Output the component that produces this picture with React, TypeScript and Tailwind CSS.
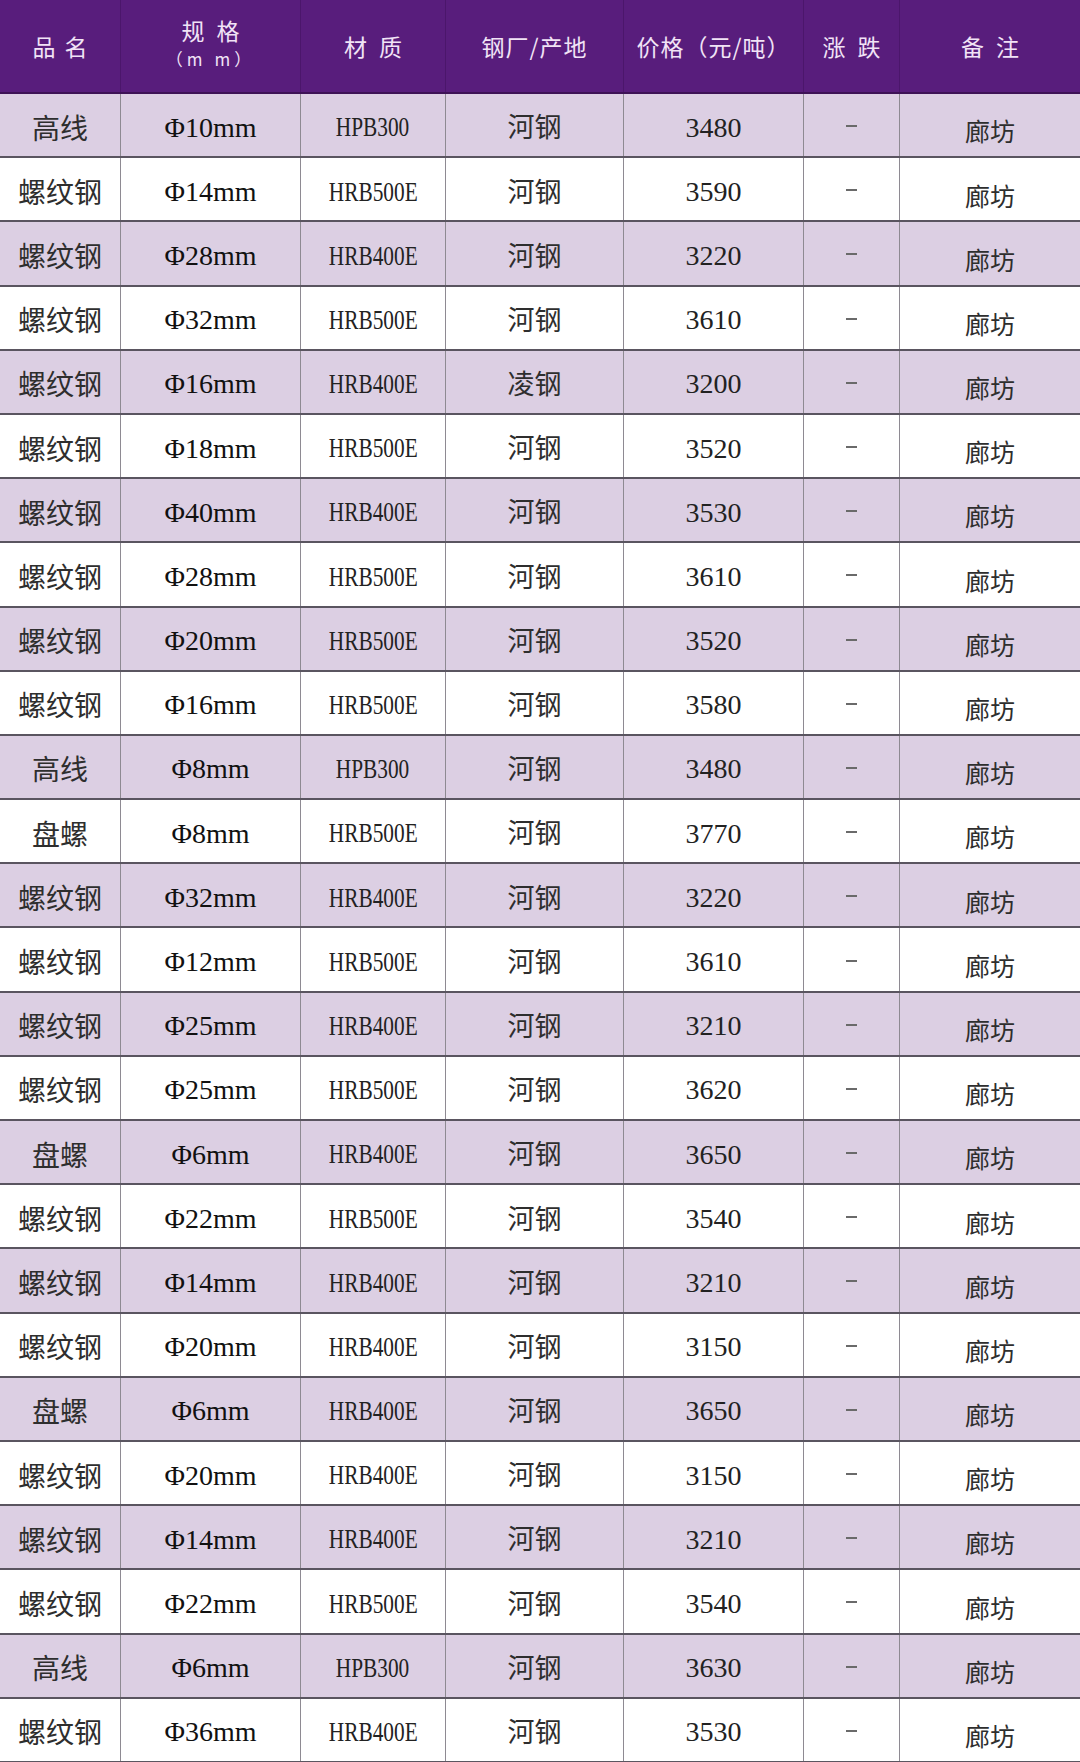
import React from "react";

const rows: [string, string, string, string, string][] = [
  ["高线", "Φ10mm", "HPB300", "河钢", "3480"],
  ["螺纹钢", "Φ14mm", "HRB500E", "河钢", "3590"],
  ["螺纹钢", "Φ28mm", "HRB400E", "河钢", "3220"],
  ["螺纹钢", "Φ32mm", "HRB500E", "河钢", "3610"],
  ["螺纹钢", "Φ16mm", "HRB400E", "凌钢", "3200"],
  ["螺纹钢", "Φ18mm", "HRB500E", "河钢", "3520"],
  ["螺纹钢", "Φ40mm", "HRB400E", "河钢", "3530"],
  ["螺纹钢", "Φ28mm", "HRB500E", "河钢", "3610"],
  ["螺纹钢", "Φ20mm", "HRB500E", "河钢", "3520"],
  ["螺纹钢", "Φ16mm", "HRB500E", "河钢", "3580"],
  ["高线", "Φ8mm", "HPB300", "河钢", "3480"],
  ["盘螺", "Φ8mm", "HRB500E", "河钢", "3770"],
  ["螺纹钢", "Φ32mm", "HRB400E", "河钢", "3220"],
  ["螺纹钢", "Φ12mm", "HRB500E", "河钢", "3610"],
  ["螺纹钢", "Φ25mm", "HRB400E", "河钢", "3210"],
  ["螺纹钢", "Φ25mm", "HRB500E", "河钢", "3620"],
  ["盘螺", "Φ6mm", "HRB400E", "河钢", "3650"],
  ["螺纹钢", "Φ22mm", "HRB500E", "河钢", "3540"],
  ["螺纹钢", "Φ14mm", "HRB400E", "河钢", "3210"],
  ["螺纹钢", "Φ20mm", "HRB400E", "河钢", "3150"],
  ["盘螺", "Φ6mm", "HRB400E", "河钢", "3650"],
  ["螺纹钢", "Φ20mm", "HRB400E", "河钢", "3150"],
  ["螺纹钢", "Φ14mm", "HRB400E", "河钢", "3210"],
  ["螺纹钢", "Φ22mm", "HRB500E", "河钢", "3540"],
  ["高线", "Φ6mm", "HPB300", "河钢", "3630"],
  ["螺纹钢", "Φ36mm", "HRB400E", "河钢", "3530"],
];

const grid = "grid grid-cols-[121px_180px_145px_178px_180px_96px_180px]";
const serif = "font-['Liberation_Serif','Noto_Sans_CJK_SC',serif]";
const cjk = "font-['Noto_Sans_CJK_SC',sans-serif]";

function HeadCell({ children, last }: { children: React.ReactNode; last?: boolean }) {
  return (
    <div
      className={`flex flex-col items-center justify-center ${last ? "" : "border-r border-[#4b166b]"}`}
    >
      {children}
    </div>
  );
}

export default function App() {
  return (
    <div className="w-[1080px] h-[1762px] overflow-hidden bg-white">
      <div className={`${grid} h-[94px] bg-[#581d7c] border-b-2 border-[#3e1256] text-[#f1e3f6] ${cjk}`}>
        <HeadCell>
          <span className="text-[23px] tracking-[9px] pl-[9px] leading-none">品名</span>
        </HeadCell>
        <HeadCell>
          <span className="text-[23px] tracking-[12px] pl-[12px] leading-none mt-[-6px]">规格</span>
          <span className="text-[17px] tracking-[4px] leading-none mt-[8px]">（m m）</span>
        </HeadCell>
        <HeadCell>
          <span className="text-[23px] tracking-[12px] pl-[12px] leading-none">材质</span>
        </HeadCell>
        <HeadCell>
          <span className="text-[23px] tracking-[1px] leading-none">钢厂/产地</span>
        </HeadCell>
        <HeadCell>
          <span className="text-[23px] tracking-[1px] leading-none">价格（元/吨）</span>
        </HeadCell>
        <HeadCell>
          <span className="text-[23px] tracking-[12px] pl-[12px] leading-none">涨跌</span>
        </HeadCell>
        <HeadCell last>
          <span className="text-[23px] tracking-[12px] pl-[12px] leading-none">备注</span>
        </HeadCell>
      </div>
      {rows.map((r, i) => (
        <div
          key={i}
          className={`${grid} h-[64.2px] border-b-2 border-[#5a5560] ${i % 2 === 0 ? "bg-[#dccfe3]" : "bg-white"}`}
        >
          <div className={`flex items-center justify-center border-r border-[#8e8a92] ${cjk} text-[28px] text-[#2e2e2e] pt-[3px]`}>
            {r[0]}
          </div>
          <div className={`flex items-center justify-center border-r border-[#8e8a92] ${serif} text-[28px] text-[#111] pt-[5px]`}>
            {r[1]}
          </div>
          <div className={`flex items-center justify-center border-r border-[#8e8a92] ${serif} text-[27px] text-[#222] pt-[5px]`}>
            <span className="inline-block scale-x-[0.79]">{r[2]}</span>
          </div>
          <div className={`flex items-center justify-center border-r border-[#8e8a92] ${cjk} text-[27px] text-[#2e2e2e] pt-[3px]`}>
            {r[3]}
          </div>
          <div className={`flex items-center justify-center border-r border-[#8e8a92] ${serif} text-[28px] text-[#222] pt-[5px]`}>
            {r[4]}
          </div>
          <div className="flex items-center justify-center border-r border-[#8e8a92]">
            <div className="w-[11px] h-[2px] bg-[#6a6a6a] mt-[2px]" />
          </div>
          <div className={`flex items-center justify-center ${cjk} text-[25px] text-[#2e2e2e] pt-[12px]`}>
            廊坊
          </div>
        </div>
      ))}
    </div>
  );
}
